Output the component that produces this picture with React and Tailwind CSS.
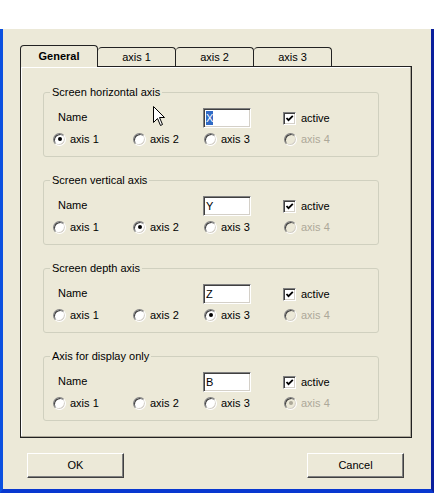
import React from "react";

const font = { fontFamily: '"Liberation Sans", Arial, sans-serif' };

function Radio({ checked, disabled }) {
  return (
    <span
      className={`flex items-center justify-center w-[13px] h-[13px] rounded-full border border-t-[#808080] border-l-[#808080] border-b-white border-r-white shadow-[inset_1px_1px_0_#404040,inset_-1px_-1px_0_#d4d0c8] ${
        disabled ? "bg-[#ece9d8]" : "bg-white"
      }`}
    >
      {checked && (
        <span className={`w-[4px] h-[4px] rounded-full ${disabled ? "bg-[#aca899]" : "bg-black"}`} />
      )}
    </span>
  );
}

function Checkbox() {
  return (
    <span className="flex items-center justify-center w-[13px] h-[13px] bg-white border border-t-[#808080] border-l-[#808080] border-b-white border-r-white shadow-[inset_1px_1px_0_#404040,inset_-1px_-1px_0_#d4d0c8]">
      <svg width="9" height="9" viewBox="0 0 9 9">
        <polyline points="1.5,4 3.5,6.2 7.8,1.8" fill="none" stroke="#000" strokeWidth="1.8" />
      </svg>
    </span>
  );
}

function EditBox({ value, selected }) {
  return (
    <span className="flex items-center w-[48px] h-[20px] bg-white border border-t-[#808080] border-l-[#808080] border-b-white border-r-white shadow-[inset_1px_1px_0_#404040,inset_-1px_-1px_0_#d4d0c8] pl-[2px]">
      <span className={`leading-[14px] ${selected ? "bg-[#316ac5] text-white" : "text-black"}`}>{value}</span>
    </span>
  );
}

function Group({ title, value, selected, axis }) {
  const cols = ["w-[80px]", "w-[71px]", "w-[80px]", "w-[80px]"];
  return (
    <fieldset className="w-[336px] h-[71px] border border-[#d0d0bf] rounded-[3px] p-0 m-0 ml-[22px]">
      <legend className="ml-[6px] px-[2px] leading-[13px]">{title}</legend>
      <div className="pt-[9px]">
        <div className="flex items-center h-[20px] pl-[14px]">
          <span className="w-[145px] -mt-[2px]">Name</span>
          <EditBox value={value} selected={selected} />
          <span className="ml-[32px]">
            <Checkbox />
          </span>
          <span className="ml-[5px]">active</span>
        </div>
        <div className="flex items-center h-[22px] pl-[9px]">
          {[1, 2, 3, 4].map((n, i) => (
            <div key={n} className={`flex items-center gap-[4px] ${cols[i]}`}>
              <Radio checked={axis === n} disabled={n === 4} />
              <span className={n === 4 ? "text-[#aca899]" : ""}>axis {n}</span>
            </div>
          ))}
        </div>
      </div>
    </fieldset>
  );
}

export default function App() {
  return (
    <div className="relative w-[434px] h-[493px] bg-white flex flex-col text-[11px] text-black" style={font}>
      <div className="h-[29px] shrink-0 bg-white" />
      <div className="flex-1 bg-[#ece9d8] border-l-[3px] border-l-[#0b50e0] border-r-[3px] border-r-[#0a1f9c] border-b-[4px] border-b-[#0838d0] pt-[16px]">
        {/* tabs */}
        <div className="flex items-end h-[21px] ml-[17px]">
          <div className="relative z-10 w-[78px] h-[22px] -mb-[1px] bg-[#ece9d8] border border-b-0 border-[#222] rounded-t-[4px] flex items-center justify-center font-bold pb-[1px]">
            General
          </div>
          {["axis 1", "axis 2", "axis 3"].map((t) => (
            <div
              key={t}
              className="w-[78px] h-[19px] bg-[#ece9d8] border border-b-0 border-l-0 border-[#222] rounded-t-[4px] flex items-center justify-center"
            >
              {t}
            </div>
          ))}
        </div>
        {/* panel */}
        <div className="ml-[17px] w-[392px] h-[372px] border border-[#222] shadow-[inset_-1px_-1px_0_#aca899,inset_1px_1px_0_#fff] pt-[19px] flex flex-col gap-[17px]">
          <Group title="Screen horizontal axis" value="X" selected axis={1} />
          <Group title="Screen vertical axis" value="Y" axis={2} />
          <Group title="Screen depth axis" value="Z" axis={3} />
          <Group title="Axis for display only" value="B" axis={4} />
        </div>
        {/* buttons */}
        <div className="flex justify-between ml-[24px] w-[377px] mt-[15px]">
          {["OK", "Cancel"].map((t) => (
            <button
              key={t}
              className="w-[97px] h-[25px] bg-[#ece9d8] border border-t-white border-l-white border-b-[#404040] border-r-[#404040] shadow-[inset_-1px_-1px_0_#808080] flex items-center justify-center"
            >
              {t}
            </button>
          ))}
        </div>
      </div>
      {/* mouse cursor */}
      <svg className="absolute left-[153px] top-[106px]" width="13" height="21" viewBox="0 0 13 21">
        <path d="M0.5 0.5 L0.5 16.5 L4.5 12.5 L7.5 19.5 L9.5 18.5 L6.5 11.5 L11.5 11.5 Z" fill="#fff" stroke="#000" strokeWidth="1" />
      </svg>
    </div>
  );
}
